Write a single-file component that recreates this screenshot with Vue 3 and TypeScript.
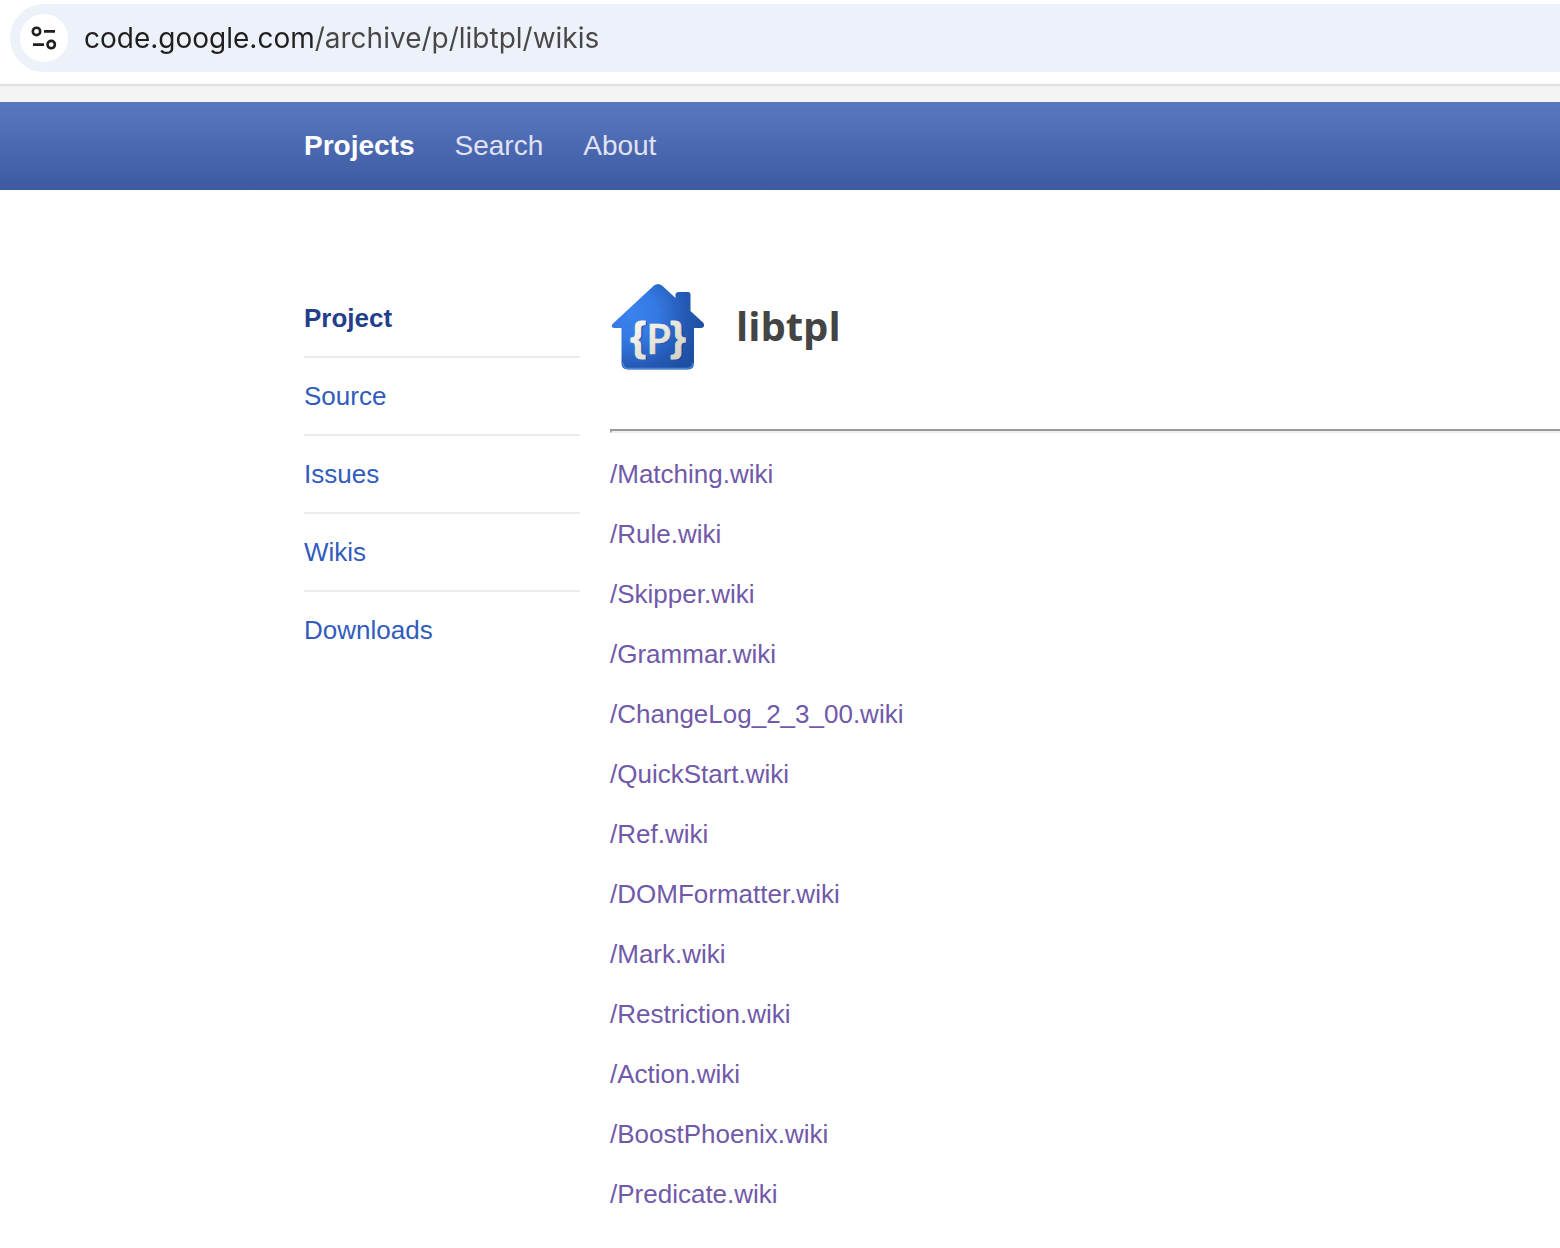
<script setup lang="ts">
import { ref } from 'vue'

interface LinkItem {
  label: string
  active?: boolean
}

const address = ref('code.google.com/archive/p/libtpl/wikis')

const navItems: LinkItem[] = [
  { label: 'Projects', active: true },
  { label: 'Search' },
  { label: 'About' },
]

const sections: LinkItem[] = [
  { label: 'Project', active: true },
  { label: 'Source' },
  { label: 'Issues' },
  { label: 'Wikis' },
  { label: 'Downloads' },
]

const wikis: string[] = [
  'Matching',
  'Rule',
  'Skipper',
  'Grammar',
  'ChangeLog_2_3_00',
  'QuickStart',
  'Ref',
  'DOMFormatter',
  'Mark',
  'Restriction',
  'Action',
  'BoostPhoenix',
  'Predicate',
]
</script>

<template>
  <div class="page">
    <div class="toolbar">
      <div class="omnibox">
        <button class="site-info" type="button" aria-label="View site information">
          <svg width="28" height="28" viewBox="0 0 28 28" fill="none" stroke="#1f1f1f" stroke-width="2.600">
            <circle cx="6.500" cy="7.400" r="3.700" />
            <path d="M14 7.400H25M3 20.600H14" />
            <circle cx="21.200" cy="20.600" r="3.700" />
          </svg>
        </button>
        <input v-model="address" class="address" type="text" aria-label="Address" spellcheck="false" />
      </div>
    </div>

    <header class="masthead">
      <nav class="nav" aria-label="Main">
        <a v-for="item in navItems" :key="item.label" href="#" :class="{ active: item.active }">{{ item.label }}</a>
      </nav>
    </header>

    <div class="body">
      <nav class="sidebar" aria-label="Project sections">
        <a v-for="item in sections" :key="item.label" href="#" :class="{ active: item.active }">{{ item.label }}</a>
      </nav>

      <main class="content">
        <div class="title">
          <svg class="logo" width="96" height="96" viewBox="0 0 96 96" aria-hidden="true">
            <defs>
              <radialGradient id="house" gradientUnits="userSpaceOnUse" cx="22" cy="34" r="72">
                <stop offset="0" stop-color="#3b82ee" />
                <stop offset="0.35" stop-color="#3579e3" />
                <stop offset="0.75" stop-color="#2459b4" />
                <stop offset="1" stop-color="#1f4fa3" />
              </radialGradient>
              <linearGradient id="paper" gradientUnits="userSpaceOnUse" x1="30" y1="38" x2="60" y2="80">
                <stop offset="0" stop-color="#f9f8f4" />
                <stop offset="1" stop-color="#d6d4c9" />
              </linearGradient>
            </defs>
            <path
              d="M44 5.500Q48 2.500 52 5.500L65.500 18V14Q66 12 69 12H78Q80.500 12 80.500 15V31L93.500 43Q95.500 47.500 91 48H84V83Q84 89.500 78 89.500H18Q11.500 89.500 11.500 83V48H4Q0.500 47.500 2.500 44Z"
              fill="url(#house)"
            />
            <path d="M13 83Q13 88 18 88.500H78Q82.500 88 83 83" fill="none" stroke="#4b86d6" stroke-width="1.500" />
            <g font-weight="600" text-anchor="middle">
              <g fill="#17438f" opacity="0.6">
                <text x="50" y="75" font-size="42" font-family="'Open Sans', sans-serif">P</text>
                <g font-size="40" font-family="'Liberation Sans', sans-serif">
                  <text x="30" y="72">{</text>
                  <text x="70" y="72">}</text>
                </g>
              </g>
              <g fill="url(#paper)" stroke="url(#paper)" stroke-linejoin="round">
                <text x="49" y="74" font-size="42" font-family="'Open Sans', sans-serif" stroke-width="0.500">P</text>
                <g font-size="40" font-family="'Liberation Sans', sans-serif" stroke-width="1">
                  <text x="28" y="71">{</text>
                  <text x="68" y="71">}</text>
                </g>
              </g>
            </g>
          </svg>
          <h1>libtpl</h1>
        </div>
        <hr />
        <ul class="wikis">
          <li v-for="name in wikis" :key="name">
            <a href="#">/{{ name }}.wiki</a>
          </li>
        </ul>
      </main>
    </div>
  </div>
</template>

<style>
body {
  margin: 0;
  background: #fff;
}
</style>

<style scoped>
.page {
  font: 26px/30px 'Liberation Sans', Arial, sans-serif;
  overflow: hidden;
}

a {
  text-decoration: none;
}

.toolbar {
  padding: 4px 0 12px 10px;
  border-bottom: 2px solid #e1e1e1;
}

.omnibox {
  display: flex;
  align-items: center;
  gap: 16px;
  height: 68px;
  padding-left: 10px;
  border-radius: 34px 0 0 34px;
  background: #edf1fa;
}

.site-info {
  display: flex;
  align-items: center;
  justify-content: center;
  flex: none;
  width: 48px;
  height: 48px;
  padding: 0;
  border: 0;
  border-radius: 50%;
  background: #fff;
}

/* The host name is darker than the path that follows it. */
.address {
  flex: 1;
  min-width: 0;
  height: 40px;
  padding: 0;
  border: 0;
  outline: 0;
  font: 28px/40px Inter, Roboto, sans-serif;
  color: transparent;
  caret-color: #1f1f1f;
  background: linear-gradient(to right, #1f1f1f 231px, #474747 231px);
  background-clip: text;
}

.masthead {
  padding: 0 0 0 304px;
  border-top: 16px solid #f4f4f4;
  background: linear-gradient(#5978bf, #3c5aa2) padding-box;
}

.nav {
  display: flex;
  gap: 40px;
  font-size: 28px;
  line-height: 88px;
}

.nav a {
  color: #e1e2f3;
}

.nav a.active {
  font-weight: 700;
  color: #fff;
}

.body {
  display: flex;
  align-items: flex-start;
  gap: 30px;
  padding: 90px 0 0 304px;
}

.sidebar {
  display: flex;
  flex-direction: column;
  flex: none;
  width: 276px;
}

.sidebar a {
  line-height: 76px;
  color: #315cbd;
}

.sidebar a + a {
  border-top: 2px solid #ebebeb;
}

.sidebar a.active {
  font-weight: 700;
  color: #233f8c;
}

.content {
  flex: 1;
  min-width: 0;
}

.title {
  display: flex;
  align-items: flex-start;
  gap: 30px;
  height: 96px;
}

h1 {
  margin: 0;
  font: 700 40px/92px 'Open Sans', 'Noto Sans', sans-serif;
  color: #444;
}

hr {
  margin: 53px 0 26px;
  border: 2px solid;
  border-color: #999 #eee #eee #999;
  border-right: 0;
}

.wikis {
  display: flex;
  flex-direction: column;
  gap: 30px;
  margin: 0;
  padding: 0;
  list-style: none;
}

.wikis a {
  color: #7159a9;
}
</style>
